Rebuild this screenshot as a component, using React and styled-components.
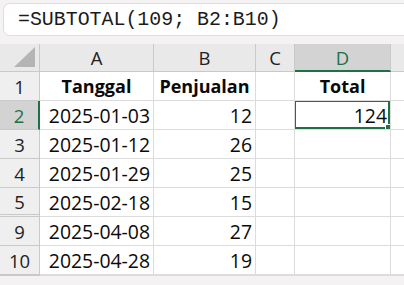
import React from "react";
import styled, { createGlobalStyle } from "styled-components";

const Global = createGlobalStyle`
  html, body { margin: 0; padding: 0; background: #f4f2f3; overflow: hidden; }
  #root { width: 404px; height: 285px; overflow: hidden; }
`;

const Page = styled.div`
  width: 404px;
  height: 285px;
  display: flex;
  flex-direction: column;
  background: #f4f2f3;
`;

const FormulaWrap = styled.div`
  padding: 3px 0 8px 3px;
  display: flex;
`;

const FormulaBar = styled.div`
  flex: 1;
  height: 31px;
  margin-right: -12px;
  background: #ffffff;
  border: 1px solid #dedcdd;
  border-radius: 7px;
  display: flex;
  align-items: center;
  padding-left: 14px;
  font-family: "Liberation Mono", "DejaVu Sans Mono", monospace;
  font-size: 19.9px;
  color: #1b1b1b;
  white-space: nowrap;
`;

const Grid = styled.div`
  display: grid;
  grid-template-columns: 40px 114px 102px 39px 96px 40px;
  grid-template-rows: 28px repeat(7, 29px);
  background: #ffffff;
  font-family: "Open Sans", "Liberation Sans", sans-serif;
  font-size: 19.4px;
  color: #0a0a0a;
`;

const Cell = styled.div`
  box-sizing: border-box;
  border-right: 1px solid #dcdcdc;
  border-bottom: 1px solid #dcdcdc;
  display: flex;
  align-items: center;
  padding: 0 3px;
  white-space: nowrap;
  overflow: hidden;
  justify-content: ${(p) =>
    p.$align === "right" ? "flex-end" : p.$align === "center" ? "center" : "flex-start"};
  font-weight: ${(p) => (p.$bold ? 700 : 400)};
  font-size: ${(p) => (p.$bold ? "18px" : "19.4px")};
  position: relative;
`;

const ColHead = styled(Cell)`
  background: ${(p) => (p.$sel ? "#d3d3d3" : "#e9e9e9")};
  color: ${(p) => (p.$sel ? "#1e7145" : "#222")};
  border-right: 1px solid #c9c9c9;
  border-bottom: ${(p) => (p.$sel ? "2px solid #1e7145" : "1px solid #c9c9c9")};
  justify-content: center;
  font-size: 18.5px;
`;

const Corner = styled(ColHead)`
  background: #e9e9e9;
  &::after {
    content: "";
    position: absolute;
    right: 4px;
    bottom: 4px;
    width: 0;
    height: 0;
    border-style: solid;
    border-width: 0 0 20px 21px;
    border-color: transparent transparent #b4b4b4 transparent;
  }
`;

const RowHead = styled(Cell)`
  background: ${(p) => (p.$sel ? "#d3d3d3" : "#efefef")};
  color: ${(p) => (p.$sel ? "#1e7145" : "#222")};
  border-right: ${(p) => (p.$sel ? "2px solid #1e7145" : "1px solid #c9c9c9")};
  border-bottom: ${(p) => (p.$gap ? "3px double #c9c9c9" : "1px solid #c9c9c9")};
  justify-content: center;
  font-size: 18.5px;
`;

const Active = styled.div`
  position: absolute;
  inset: -1px 0 0 -1px;
  border: 2px solid #1e7145;
  pointer-events: none;
  &::after {
    content: "";
    position: absolute;
    right: -5px;
    bottom: -5px;
    width: 6px;
    height: 6px;
    background: #1e7145;
    border: 1px solid #fff;
  }
`;

const rows = [
  { n: "1", a: "Tanggal", b: "Penjualan", d: "Total", head: true },
  { n: "2", a: "2025-01-03", b: "12", d: "124", sel: true },
  { n: "3", a: "2025-01-12", b: "26" },
  { n: "4", a: "2025-01-29", b: "25" },
  { n: "5", a: "2025-02-18", b: "15", gap: true },
  { n: "9", a: "2025-04-08", b: "27" },
  { n: "10", a: "2025-04-28", b: "19" },
];

export default function App() {
  return (
    <Page>
      <Global />
      <FormulaWrap>
        <FormulaBar>=SUBTOTAL(109; B2:B10)</FormulaBar>
      </FormulaWrap>
      <Grid>
        <Corner />
        <ColHead>A</ColHead>
        <ColHead>B</ColHead>
        <ColHead>C</ColHead>
        <ColHead $sel>D</ColHead>
        <ColHead />
        {rows.map((r) => (
          <React.Fragment key={r.n}>
            <RowHead $sel={r.sel} $gap={r.gap}>{r.n}</RowHead>
            <Cell $align={r.head ? "center" : "right"} $bold={r.head}>{r.a}</Cell>
            <Cell $align={r.head ? "center" : "right"} $bold={r.head}>{r.b}</Cell>
            <Cell />
            <Cell $align={r.head ? "center" : "right"} $bold={r.head}>
              {r.d}
              {r.sel && <Active />}
            </Cell>
            <Cell />
          </React.Fragment>
        ))}
        <RowHead />
        <Cell />
        <Cell />
        <Cell />
        <Cell />
        <Cell />
      </Grid>
    </Page>
  );
}
